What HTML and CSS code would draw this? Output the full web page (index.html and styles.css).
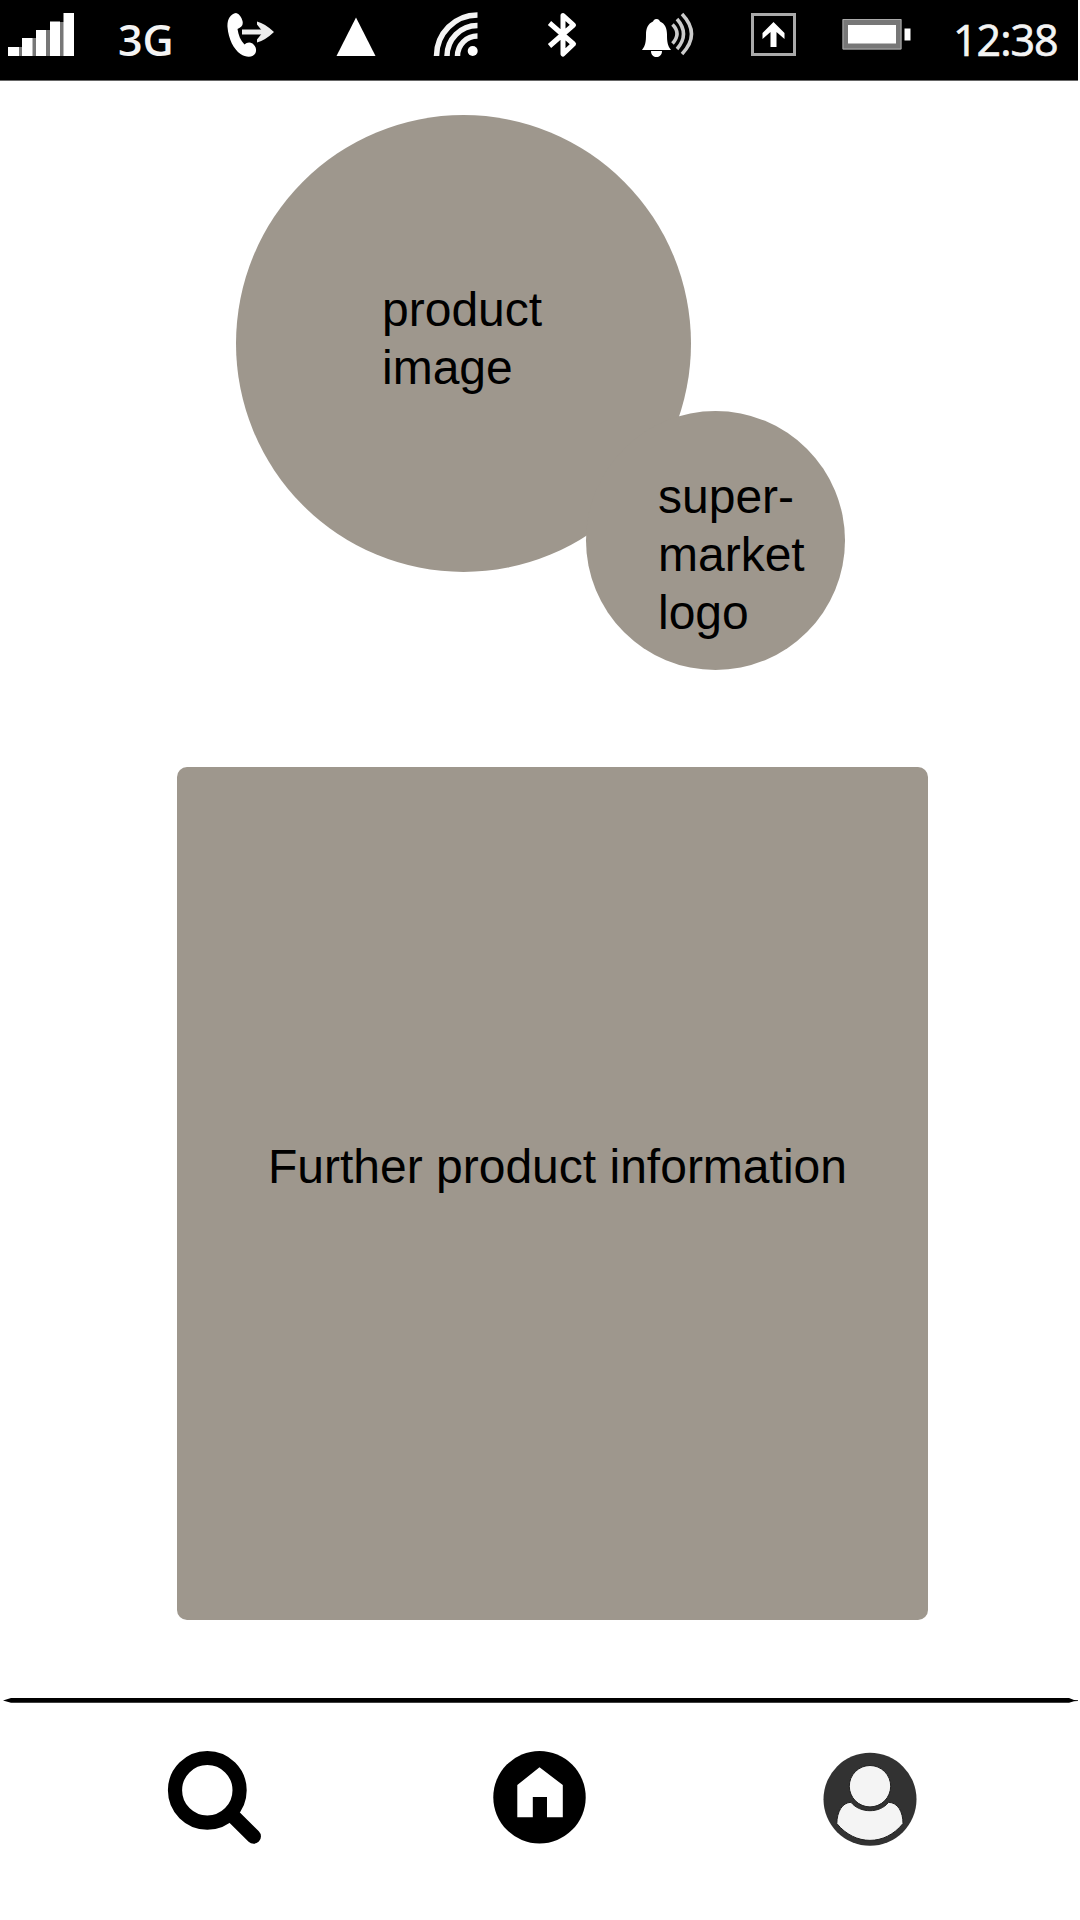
FILE: index.html
```html
<!DOCTYPE html>
<html lang="en">
<head>
<meta charset="utf-8">
<title>Product</title>
<link rel="stylesheet" href="styles.css">
</head>
<body>
<div class="screen">
  <header class="status">
    <svg class="status-icon" width="90" height="80" viewBox="0 0 90 80">
      <path fill="#777" d="M18 47h5v9h-5zM32 38h4v18h-4zM46 30h4v26h-4zM59 22h5v34h-5z"/>
      <path d="M8 47h11v9H8zM22 38h10.500v18H22zM36 30h10v26H36zM50 21.500h10v34.500H50zM63.500 13H74v43H63.500z"/>
    </svg>
    <span class="network">3G</span>
    <svg class="status-icon" width="105" height="80" viewBox="200 0 105 80">
      <path d="M236 13c-6 1-9 7-8.500 14 1 12 6 22 13 27 6 4 13 3.500 15-1 1.500-4 0-7-3-9.500-3-2-6-1-8 1-4-4-6-9-7-15.500 4-2 6-4 5-8-1-4-3-7-6.500-8z"/>
      <path fill="none" stroke="#eee" stroke-width="5" d="M242 32h27"/>
      <path fill="#eee" d="M257 21.500q8 2 17 10.500q-9 8.500-17 10.500v-3l6-7.500l-6-7.500z"/>
    </svg>
    <svg class="status-icon" width="100" height="80" viewBox="305 0 100 80">
      <path d="M356 17.500L375.500 56H336.500z"/>
    </svg>
    <svg class="status-icon" width="105" height="80" viewBox="405 0 105 80">
      <g fill="none" stroke="#f4f4f4" stroke-width="5.500">
        <path d="M436.500 56A41 41 0 0 1 477.500 15"/>
        <path d="M447 56A30.500 30.500 0 0 1 477.500 25.500"/>
        <path d="M457.500 56A20 20 0 0 1 477.500 36"/>
      </g>
      <circle cx="472.700" cy="51" r="5"/>
    </svg>
    <svg class="status-icon" width="105" height="80" viewBox="510 0 105 80">
      <path fill="none" stroke="#fff" stroke-width="5" stroke-linejoin="round" d="M549.500 23L573.500 44L563 54V15.500L573.500 25L549.500 46"/>
    </svg>
    <svg class="status-icon" width="105" height="80" viewBox="615 0 105 80">
      <path d="M656.500 19c2.500 0 3 1.500 3.500 2.500 5 2 7 7 7 13 0 7 .5 11 4 15.500h-29c3.500-4.500 4-8.500 4-15.500 0-6 2-11 7-13 .5-1 1-2.500 3.500-2.500zM651 51h11c0 8-11 8-11 0z"/>
      <g fill="none" stroke="#ccc" stroke-width="3.500">
        <path d="M672.500 24.500q9 9 0 19"/>
        <path d="M677 19q13 15 0 30"/>
        <path d="M682 14q19 20 0 40"/>
      </g>
    </svg>
    <svg class="status-icon" width="105" height="80" viewBox="720 0 105 80">
      <path fill="none" stroke="#aaa" stroke-width="3" d="M752.500 14.500h42v40h-42z"/>
      <path d="M773.500 22l11 11v6l-8-7v15h-6V32l-8 7v-6z"/>
    </svg>
    <svg class="status-icon" width="110" height="80" viewBox="825 0 110 80">
      <path fill="#777" d="M842.500 19h59v30.500h-59z"/>
      <path fill="none" stroke="#aaa" d="M843 19.500h58v29.500h-58z"/>
      <path d="M848 25h48v18.500h-48zM904.500 28.500h6v12h-6z"/>
    </svg>
    <span class="clock">12:38</span>
  </header>

  <main class="content">
    <section class="hero">
      <div class="product-image">product<br>image</div>
      <div class="market-logo">super-<br>market<br>logo</div>
    </section>
    <section class="details">Further product information</section>
  </main>

  <nav class="tabs">
    <svg class="divider" width="1080" height="6" viewBox="0 1698 1080 6">
      <path d="M3 1700.500L11 1698H1069L1074 1700L1078 1700.300V1701L1074 1701.200L1069 1702.800H11z"/>
    </svg>
    <div class="tab-row">
      <svg width="95" height="95" viewBox="167 1750 95 95">
        <circle cx="207.300" cy="1790.300" r="32.300" fill="none" stroke="#000" stroke-width="14.200"/>
        <path d="M231 1814L253.700 1836.500" stroke="#000" stroke-width="14.500" stroke-linecap="round"/>
      </svg>
      <svg width="95" height="95" viewBox="495 1750 95 95">
        <circle cx="539.500" cy="1797.200" r="46.200"/>
        <path fill="#fff" d="M539.500 1767.300L562.800 1785V1817.300H547V1797H532.800V1817.300H517.300V1785z"/>
      </svg>
      <svg width="95" height="95" viewBox="823 1752 95 95">
        <circle cx="870" cy="1799.300" r="46.500" fill="#323232"/>
        <g fill="#f4f4f4" stroke="#202020">
          <circle cx="870" cy="1786.200" r="20.700"/>
          <path d="M851 1802.300C860 1813.500 880 1813.500 888.500 1802.300C898 1802.500 903 1812 903 1823.500C885 1846 855 1846 836.800 1823.500C837 1812 842 1802.500 851 1802.300z"/>
        </g>
      </svg>
    </div>
  </nav>
</div>
</body>
</html>
```
FILE: styles.css
```css
* {
  box-sizing: border-box;
}

body {
  margin: 0;
  background: #fff;
}

svg {
  display: block;
  flex: none;
  overflow: visible;
}

.screen {
  display: flex;
  flex-direction: column;
  width: 1080px;
  height: 1920px;
  overflow: hidden;
  font: 48px/57.6px "Liberation Sans", Arial, sans-serif;
  color: #000;
}

.status {
  display: flex;
  width: 1078px;
  height: 81px;
  background: #000;
  border-bottom: 1px solid #666;
  color: #f4f4f4;
  font-family: "Open Sans", "Noto Sans", sans-serif;
  font-size: 43px;
  line-height: 80px;
  white-space: nowrap;
}

.status-icon {
  fill: #fff;
}

.network {
  width: 110px;
  padding-left: 28px;
  font-weight: 600;
}

.clock {
  width: 143px;
  padding-left: 18px;
  font-weight: 500;
  letter-spacing: -1px;
  -webkit-text-stroke: 0.7px #f4f4f4;
}

.content {
  display: flex;
  flex-direction: column;
  height: 1617px;
  padding-top: 34px;
}

.hero {
  position: relative;
  width: 609px;
  height: 555px;
  margin-left: 236px;
}

.product-image {
  width: 455px;
  height: 457px;
  padding: 166.4px 0 0 146px;
  border-radius: 50%;
  background: #9e978d;
}

/* The store badge overlaps the lower right of the product image. */
.market-logo {
  position: absolute;
  right: 0;
  bottom: 0;
  width: 259px;
  height: 259px;
  padding: 57.4px 0 0 72px;
  border-radius: 50%;
  background: #9e978d;
}

.details {
  width: 751px;
  height: 853px;
  margin: 97px 0 0 177px;
  padding: 371.4px 0 0 91px;
  border-radius: 10px;
  background: #9e978d;
  white-space: nowrap;
}

.tab-row {
  display: flex;
  justify-content: space-between;
  padding: 46px 162px 0 167px;
}

.tab-row svg:last-child {
  margin-top: 2px;
}
```
